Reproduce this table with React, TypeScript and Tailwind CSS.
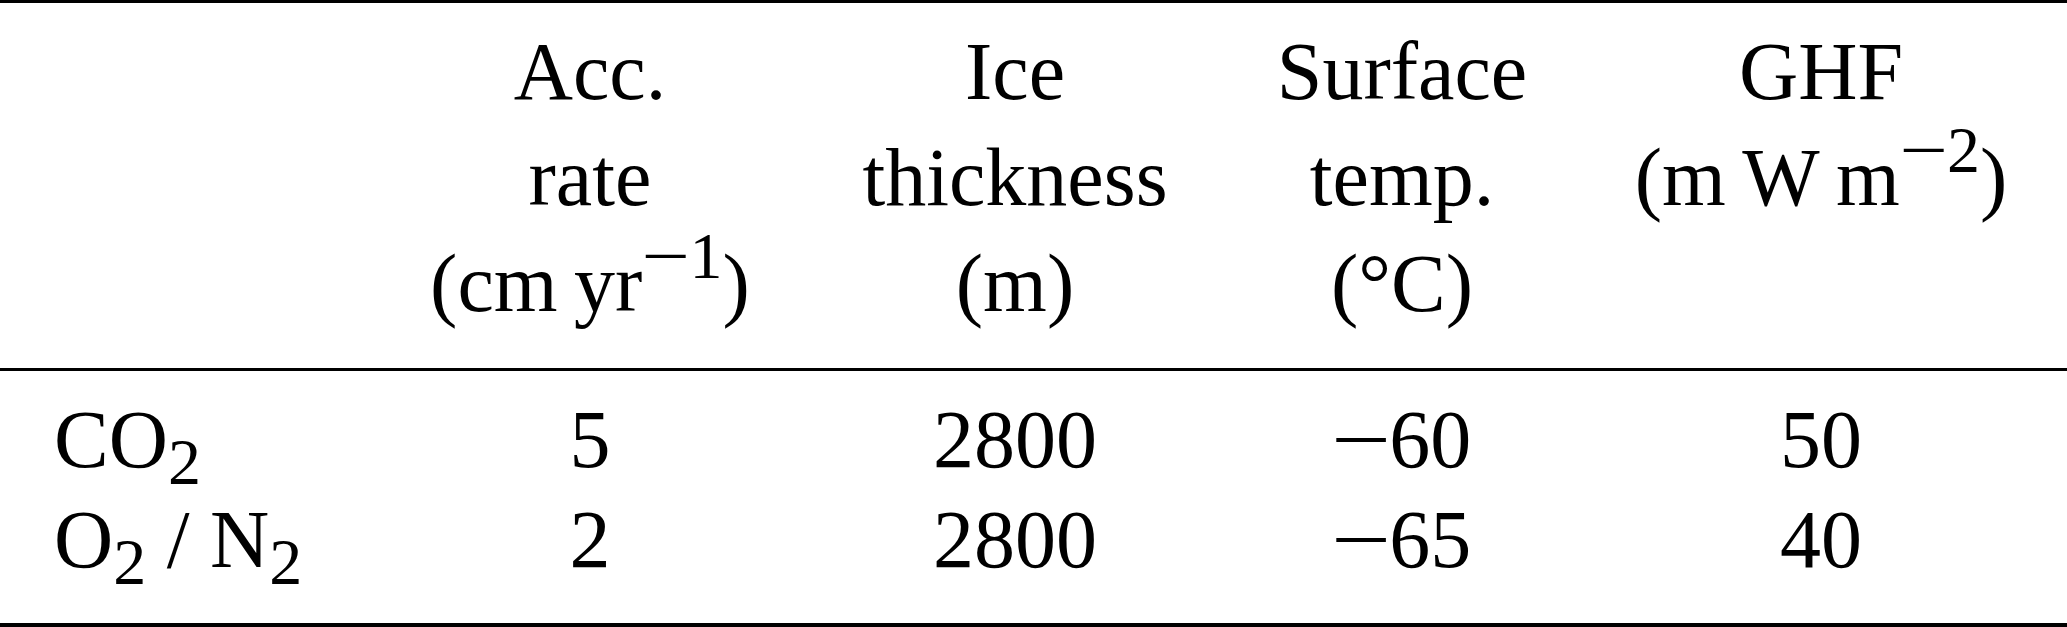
import React from "react";

const serif = { fontFamily: '"Liberation Serif", "Times New Roman", serif' };

// TeX-style minus is wider than the font's U+2212
function Minus() {
  return <span className="inline-block mx-[5px] scale-x-[1.3]">−</span>;
}

function Sup({ children }: { children: React.ReactNode }) {
  return <span className="relative -top-[33px] text-[66px] leading-none">{children}</span>;
}

function Sub({ children }: { children: React.ReactNode }) {
  return <span className="relative top-[17px] text-[66px] leading-none">{children}</span>;
}

const header: React.ReactNode[][] = [
  [],
  [
    "Acc.",
    "rate",
    <>
      (cm{"\u2009"}yr
      <Sup>
        <Minus />1
      </Sup>
      )
    </>,
  ],
  ["Ice", "thickness", "(m)"],
  ["Surface", "temp.", "(°C)"],
  [
    "GHF",
    <>
      (m{"\u2009"}W{"\u2009"}m
      <Sup>
        <Minus />2
      </Sup>
      )
    </>,
  ],
];

const rows: React.ReactNode[][] = [
  [
    <>
      CO<Sub>2</Sub>
    </>,
    "5",
    "2800",
    <>
      <Minus />60
    </>,
    "50",
  ],
  [
    <>
      O<Sub>2</Sub> / N<Sub>2</Sub>
    </>,
    "2",
    "2800",
    <>
      <Minus />65
    </>,
    "40",
  ],
];

const grid = "grid grid-cols-[379px_422px_428px_346px_492px]";

export default function App() {
  return (
    <div className="w-[2067px] h-[627px] bg-white text-black text-[82px] overflow-hidden" style={serif}>
      {/* top rule */}
      <div className="h-[3px] bg-black" />

      {/* header */}
      <div className={`${grid} pt-[16px] pb-[31px] leading-[106px]`}>
        {header.map((lines, i) => (
          <div key={i} className="flex flex-col items-center h-[318px]">
            {lines.map((l, j) => (
              <div key={j} className="whitespace-nowrap">
                {l}
              </div>
            ))}
          </div>
        ))}
      </div>

      {/* mid rule */}
      <div className="h-[3px] bg-black" />

      {/* body */}
      <div className="pt-[19px] pb-[33px] leading-[100px]">
        {rows.map((r, i) => (
          <div key={i} className={`${grid} h-[100px]`}>
            {r.map((c, j) => (
              <div
                key={j}
                className={j === 0 ? "pl-[54px] whitespace-nowrap" : "text-center whitespace-nowrap"}
              >
                {c}
              </div>
            ))}
          </div>
        ))}
      </div>

      {/* bottom rule */}
      <div className="h-[4px] bg-black" />
    </div>
  );
}
